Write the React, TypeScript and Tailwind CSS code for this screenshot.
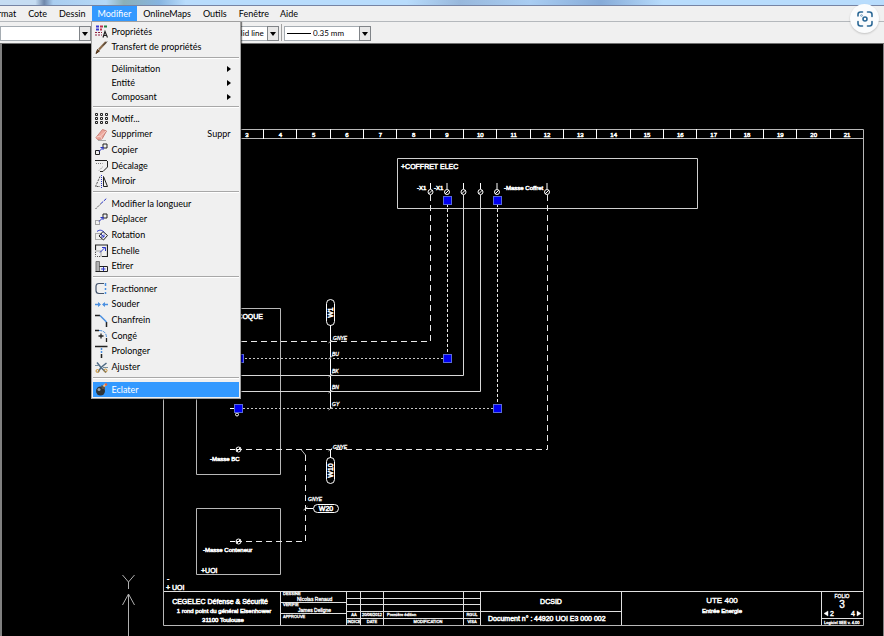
import type { ReactNode } from 'react';

type MenuItem = {
  label: string;
  icon?: ReactNode;
  shortcut?: string;
  submenu?: boolean;
  active?: boolean;
};

const BLUE = '#2a35c8';
const SKY = '#4a8fe0';
const INK = '#222222';

// 13x13 menu icons
const icons = {
  properties: (
    <>
      <path d="M1 1.5h3M1 4.5h3" stroke="#3a3ad0" strokeWidth="2" />
      <path d="M5 1.5h3M5 4.5h2" stroke="#c03050" strokeWidth="2" />
      <path d="M9 1.5h3" stroke="#208040" strokeWidth="2" />
      <path d="M0 7.5h7M0 10h7" stroke="#902040" strokeDasharray="2 1" />
      <path d="M8 12.5l2-6 2.5 6M8.5 10.5h3" stroke={INK} strokeWidth="1.2" />
    </>
  ),
  brush: (
    <>
      <path d="M1 12.5l1.5-4 2 1.5z" fill="#8a5a28" stroke="#4a3018" />
      <path d="M4 8.5L11 1" stroke="#8c6b4a" strokeWidth="2.2" />
      <path d="M8 4.5L12 .5" stroke="#333" />
    </>
  ),
  pattern: (
    <path
      d="M.5 1.5h2v2h-2zM5.5 1.5h2v2h-2zM10.5 1.5h2v2h-2zM.5 5.5h2v2h-2zM5.5 5.5h2v2h-2zM10.5 5.5h2v2h-2zM.5 9.5h2v2h-2zM5.5 9.5h2v2h-2zM10.5 9.5h2v2h-2z"
      stroke={INK}
    />
  ),
  eraser: (
    <>
      <path d="M1 9.5L7.5 1.5 11.5 3 7 11 2.5 11.5z" fill="#eda79c" stroke="#c98078" />
      <path d="M1.5 9l4-1 1.5 3M5.5 8l5.5-5" stroke="#f6d0c8" />
      <path d="M3 12.5h8" stroke="#a8a8a8" />
    </>
  ),
  copy: (
    <>
      <path d="M.5 7.5h4v4h-4zM8 1h4v4H8z" stroke={INK} />
      <path d="M4 8.5L8 4.5M5.5 4.5H8V7" stroke={BLUE} />
    </>
  ),
  offset: (
    <>
      <path d="M0 1.5h12.5V8L8 12.5H5" stroke={INK} strokeDasharray="12 1 20" />
      <path d="M1 4.5h6.5M7.5 8L4 11.5" stroke="#777" strokeDasharray="1 1" />
    </>
  ),
  mirror: (
    <>
      <path d="M5 1.5L.5 11.5H5" stroke="#555" strokeDasharray="2 1" />
      <path d="M6.5 0v13" stroke={BLUE} strokeDasharray="1 1" />
      <path d="M8.5 1.5v10h4z" stroke={INK} />
    </>
  ),
  lengthen: (
    <>
      <path d="M.5 12L6 6.5" stroke="#555" strokeDasharray="2 1" />
      <path d="M6 6.5L12 1" stroke={BLUE} strokeDasharray="3 1" />
    </>
  ),
  move: (
    <>
      <path d="M.5 7.5h4v4h-4z" stroke="#555" strokeDasharray="1 1" />
      <path d="M8 1h4v4H8z" stroke={INK} />
      <path d="M4 8.5L8 4.5M5.5 4.5H8V7" stroke={BLUE} />
    </>
  ),
  rotate: (
    <>
      <path d="M.5 5.5h6v6h-6z" stroke="#666" strokeDasharray="1 1" />
      <path d="M8 3.5l4.5 4-4 4.5-4.5-4z" stroke={INK} />
      <path d="M2 3.5c3-2.5 6-1 7 1M6 6l3 3M9 6.5V9H6.5" stroke={BLUE} />
    </>
  ),
  scale: (
    <>
      <path d="M.5 6V1h12v11.5H7" stroke={INK} strokeWidth="1.2" />
      <path d="M.5 7H6v5.5H.5z" stroke="#555" strokeDasharray="1 1" />
      <path d="M5 8.5l5-5M7 3.5h3.5V7" stroke={BLUE} />
    </>
  ),
  stretch: (
    <>
      <path d="M1 1.5h3.500v10H1z" fill="#b0b0b0" stroke="#777" />
      <path d="M4.5 6.5h8v5H.5" stroke={INK} />
      <path d="M6 9h4.5M8.5 7v4" stroke={BLUE} />
    </>
  ),
  split: (
    <>
      <path d="M9 1.5H4q-3 0-3 3v4q0 3 3 3h5" stroke="#44546c" strokeWidth="1.2" />
      <path d="M10.5 1v3M10.5 6v2M10.5 10v2" stroke={SKY} strokeWidth="1.5" />
    </>
  ),
  join: (
    <>
      <path d="M0 6.500h5M8 6.500h5" stroke={SKY} strokeWidth="1.5" />
      <path d="M3 4l3 2.5L3 9zM10 4L7 6.5 10 9z" fill={SKY} />
    </>
  ),
  chamfer: (
    <>
      <path d="M0 1.5h5M11.5 8v5" stroke={INK} strokeWidth="1.5" />
      <path d="M5 1.5L11.5 8" stroke={SKY} strokeWidth="1.5" />
    </>
  ),
  fillet: (
    <>
      <path d="M0 1.5h4M11.5 9v4" stroke={INK} strokeWidth="1.3" />
      <path d="M4 1.5q7.5 0 7.5 7.5" stroke={SKY} strokeDasharray="3 1" />
      <path d="M6 4.5v5M3.5 7h5" stroke={INK} strokeWidth="1.3" />
    </>
  ),
  extend: (
    <>
      <path d="M0 1.5h12.5" stroke={INK} strokeWidth="1.5" />
      <path d="M6.5 3v6" stroke={SKY} strokeWidth="1.5" strokeDasharray="2 1" />
      <path d="M6.5 9v4" stroke={INK} strokeWidth="1.5" />
    </>
  ),
  trim: (
    <>
      <path d="M2 1.5l4 5 5 5M11.5 2L6 6.5 3 11" stroke="#4e6a84" strokeWidth="1.5" />
      <circle cx="2.5" cy="10" r="1.5" stroke="#c89030" />
      <circle cx="10.5" cy="9.5" r="1.5" stroke="#c89030" />
      <path d="M0 4.5h4M8 6.5h5" stroke="#7890a0" />
    </>
  ),
  explode: (
    <>
      <circle cx="5.5" cy="8" r="4.5" fill="#2e3438" />
      <circle cx="4" cy="6.5" r="1.5" fill="#9aa2a6" />
      <path d="M6 2.5h4V6H7z" fill="#5b5045" />
      <path d="M8.5 3.5L11 1" stroke="#f3c38a" strokeWidth="2" />
      <circle cx="11" cy="1.5" r="1.2" fill="#e8643a" />
    </>
  ),
};

const groups: { height: string; items: MenuItem[] }[] = [
  {
    height: 'h-[31px]',
    items: [
      { label: 'Propriétés', icon: icons.properties },
      { label: 'Transfert de propriétés', icon: icons.brush },
    ],
  },
  {
    height: 'h-[42px]',
    items: [
      { label: 'Délimitation', submenu: true },
      { label: 'Entité', submenu: true },
      { label: 'Composant', submenu: true },
    ],
  },
  {
    height: 'h-[78px]',
    items: [
      { label: 'Motif...', icon: icons.pattern },
      { label: 'Supprimer', icon: icons.eraser, shortcut: 'Suppr' },
      { label: 'Copier', icon: icons.copy },
      { label: 'Décalage', icon: icons.offset },
      { label: 'Miroir', icon: icons.mirror },
    ],
  },
  {
    height: 'h-[78px]',
    items: [
      { label: 'Modifier la longueur', icon: icons.lengthen },
      { label: 'Déplacer', icon: icons.move },
      { label: 'Rotation', icon: icons.rotate },
      { label: 'Echelle', icon: icons.scale },
      { label: 'Etirer', icon: icons.stretch },
    ],
  },
  {
    height: 'h-[94px]',
    items: [
      { label: 'Fractionner', icon: icons.split },
      { label: 'Souder', icon: icons.join },
      { label: 'Chanfrein', icon: icons.chamfer },
      { label: 'Congé', icon: icons.fillet },
      { label: 'Prolonger', icon: icons.extend },
      { label: 'Ajuster', icon: icons.trim },
    ],
  },
  {
    height: 'h-[15px]',
    items: [{ label: 'Eclater', icon: icons.explode, active: true }],
  },
];

const MenuRow = ({ item }: { item: MenuItem }) => (
  <button
    role="menuitem"
    className={`flex min-h-0 w-full items-center pl-[2px] pr-2 text-left ${item.active ? 'bg-[#3399ff] text-white' : ''}`}
  >
    <span className="w-[17px] shrink-0">
      {item.icon && (
        <svg viewBox="0 0 13 13" className="size-[13px]" fill="none">
          {item.icon}
        </svg>
      )}
    </span>
    <span className="flex-1">{item.label}</span>
    {item.shortcut && <span>{item.shortcut}</span>}
    {item.submenu && (
      <svg viewBox="0 0 4 6" className="h-[6px] w-1" fill="#000">
        <path d="M0 0l4 3-4 3z" />
      </svg>
    )}
  </button>
);

const EditMenu = () => (
  <div
    role="menu"
    className="absolute -left-px top-full z-20 w-[150px] border border-[#a0a0a0] bg-[#f0f0f0] px-px pt-[2px] pb-px text-black shadow-[1px_1px_1px_#00000080]"
  >
    {groups.map((group, i) => (
      <div key={i}>
        {i > 0 && (
          <div className="h-[7px] pt-[2px]">
            <div className="h-[2px] border-t border-b border-t-[#a8a8a8] border-b-white" />
          </div>
        )}
        <div className={`grid auto-rows-fr ${group.height}`}>
          {group.items.map((item) => (
            <MenuRow key={item.label} item={item} />
          ))}
        </div>
      </div>
    ))}
  </div>
);

const MenuBar = () => (
  <nav className="flex h-4 bg-[#f0f0f0] border-b border-[#b4b8bc]">
    <button className="-ml-[18px] px-[6px]">Format</button>
    <button className="px-[6px]">Cote</button>
    <button className="px-[6px]">Dessin</button>
    <div className="relative flex">
      <button className="bg-[#3399ff] px-[6px] text-white" aria-haspopup="menu" aria-expanded="true">
        Modifier
      </button>
      <EditMenu />
    </div>
    <button className="px-[6px]">OnlineMaps</button>
    <button className="px-[6px]">Outils</button>
    <button className="px-[6px]">Fenêtre</button>
    <button className="px-[5px]">Aide</button>
  </nav>
);

type ComboProps = { label: string; value: string; width: string; pad: string; line?: boolean };

const Combo = ({ label, value, width, pad, line }: ComboProps) => (
  <div className={`relative h-[15px] ${width}`}>
    <select
      aria-label={label}
      defaultValue={value}
      className={`block h-full w-full appearance-none border border-[#a5acb2] bg-white text-[8px] leading-[13px] ${pad}`}
    >
      <option>{value}</option>
    </select>
    {line && <div className="pointer-events-none absolute left-[3px] top-[7px] h-px w-6 bg-black" />}
    <div className="pointer-events-none absolute inset-y-0 right-0 flex w-3 items-center justify-center border border-[#808488] bg-[#e8e8e8]">
      <svg viewBox="0 0 6 4" className="h-1 w-[6px]">
        <path d="M0 0h6L3 4z" />
      </svg>
    </div>
  </div>
);

const Toolbar = () => (
  <div className="flex h-[22px] items-end border-b border-[#707070] bg-[#f0f0f0] pb-[2px]">
    <Combo label="Calque" value="" width="w-[91px]" pad="pl-1" />
    <div className="ml-[99px] mr-[2px]">
      <Combo label="Type de ligne" value="Solid line" width="w-[89px]" pad="pl-[41px]" line />
    </div>
    <div className="mr-[2px] h-[17px] w-px bg-[#a0a0a0]" />
    <Combo label="Epaisseur" value="0.35 mm" width="w-[87px]" pad="pl-[28px]" line />
  </div>
);

const columns = Array.from({ length: 19 }, (_, i) => i + 3);

const terminals = [430.5, 447, 463.5, 480.5, 497, 547];

const wireLabels = [
  { x: 333, y: 340, name: 'GNYE' },
  { x: 332, y: 356, name: 'BU' },
  { x: 332, y: 373, name: 'BK' },
  { x: 332, y: 389, name: 'BN' },
  { x: 332, y: 406, name: 'GY' },
  { x: 333, y: 449, name: 'GNYE' },
  { x: 308, y: 501, name: 'GNYE' },
];

const grips = [
  [447, 200],
  [497, 200],
  [447, 358],
  [239, 358],
  [497, 408],
  [238, 408],
];

const Terminal = ({ x, y }: { x: number; y: number }) => (
  <>
    <circle cx={x} cy={y} r="2.5" />
    <path d={`M${x - 2} ${y + 2}l4-4`} />
  </>
);

const Drawing = () => (
  <svg
    viewBox="0 44 884 592"
    className="block h-auto w-full"
    fontFamily="'Liberation Sans', Arial, sans-serif"
    role="img"
    aria-label="Schéma de câblage UTE 400"
  >
    {/* Sheet frame, boxes and solid wires */}
    <g fill="none" stroke="#b8b8b8">
      <path d="M163.5 129.5H863.5V625.5H163.5zM163.5 138.5H863.5" />
      {columns.slice(0, -1).map((n, i) => (
        <path key={n} d={`M${Math.round(263 + (i * 100) / 3) + 0.5} 129v10`} stroke="#fff" />
      ))}
      <path d="M397.5 158.5H697.5V208.5H397.5z" stroke="#d0d0d0" />
      <path d="M196.5 308.5H280.5V474.5H196.5zM196.5 508.5H280.5V574.5H196.5z" />
      <path d="M463.5 195V375.5H240M480.5 195V391.5H240" stroke="#d8d8d8" />
      <path d="M330.5 325V409M330.5 449V458M305 508.5h8" stroke="#fff" />
      <path d="M328.5 343l4-3M328.5 359l4-3M328.5 377l4-3M328.5 393l4-3M328.5 410l4-3M328.5 451l4-3M303.5 510l4-3M301 449.5l4.5 5.5" />
    </g>

    {/* Dashed wires */}
    <g fill="none" stroke="#e8e8e8">
      <path d="M430.5 195V341.5H240M547.5 195V449.5H230M305.5 455V541.5H230" strokeDasharray="6 4" />
      <path d="M447.5 204V358M497.5 204V408" strokeDasharray="3 2" />
      <path d="M447 358.5H240M497 408.5H230" strokeDasharray="2 2" stroke="#c8c8c8" />
    </g>

    <g fill="none" stroke="#fff">
      {terminals.map((x) => (
        <g key={x}>
          <path d={`M${x} 183v6`} />
          <Terminal x={x} y={192} />
        </g>
      ))}
      <Terminal x={238.5} y={449.5} />
      <Terminal x={238.5} y={541.5} />
      <path d="M230 408.5h6M230 449.5h5M230 541.5h5" />
      <circle cx="237" cy="414.5" r="1.5" />
      <rect x="326.5" y="299.5" width="8" height="26" rx="4" />
      <rect x="326.5" y="457.5" width="8" height="26" rx="4" />
      <rect x="313.5" y="504.5" width="25" height="8" rx="4" />
    </g>

    {grips.map(([x, y]) => (
      <rect key={`${x}-${y}`} x={x - 3.5} y={y - 3.5} width="8" height="8" fill="#0000f0" stroke="#5a6ad8" />
    ))}

    {/* Title block */}
    <g fill="none" stroke="#e0e0e0">
      <path d="M164 591.5H863M280.5 591v34M346.5 591v34M360.5 591v34M383.5 591v34M463.5 591v34M480.5 591v34M621.5 591v34M821.5 591v34" />
      <path d="M281 602.5h65M281 613.5h65M347 598.5h133M347 604.5h133M347 611.5h274M347 618.5h133M822 618.5h41" />
    </g>

    {/* UCS marker */}
    <path
      d="M128.5 636V594M122.5 605l6-11 6 11M122.5 575l6 7 6-7M128.5 582v7"
      fill="none"
      stroke="#b0b0b0"
    />

    <g fill="#fff" stroke="#fff" strokeWidth="0.5" fontSize="7">
      <text x="401" y="169">+COFFRET ELEC</text>
      <text x="263" y="319" textAnchor="end">+COQUE</text>
      <text x="201" y="573">+UOI</text>
      <text x="167" y="581">-</text>
      <text x="166" y="590">+ UOI</text>
      <text x="220" y="604" textAnchor="middle">CEGELEC Défense &amp; Sécurité</text>
      <text x="551" y="604" textAnchor="middle">DCSID</text>
      <text x="488" y="621">Document n° :</text>
      <text x="534" y="621">44920 UOI E3 000 002</text>
    </g>

    <g fill="#fff" stroke="#fff" strokeWidth="0.5" fontSize="6">
      <text x="417" y="190">-X1</text>
      <text x="434" y="190">-X1</text>
      <text x="504" y="190">-Masse Coffret</text>
      <text x="210" y="461">-Masse BC</text>
      <text x="203" y="552">-Masse Conteneur</text>
      <text x="224" y="613" textAnchor="middle">1 rond point du général Eisenhower</text>
      <text x="223" y="622" textAnchor="middle">31100 Toulouse</text>
      <text x="722" y="613" textAnchor="middle">Entrée Energie</text>
      <text transform="translate(333 312.5) rotate(-90)" textAnchor="middle" fontSize="7">W1</text>
      <text transform="translate(333 470.5) rotate(-90)" textAnchor="middle" fontSize="7">W10</text>
      <text x="326" y="511" textAnchor="middle" fontSize="7">W20</text>
      {columns.map((n, i) => (
        <text key={n} x={247 + (i * 100) / 3} y="137" textAnchor="middle">
          {n}
        </text>
      ))}
    </g>

    <g fill="#fff" stroke="#fff" strokeWidth="0.4" textAnchor="middle">
      <text x="722" y="603" fontSize="8">UTE 400</text>
      <text x="842" y="608" fontSize="10">3</text>
      <text x="832" y="616" fontSize="7">2</text>
      <text x="853" y="616" fontSize="7">4</text>
      <path d="M828 611v5l-4-2.5zM857 611v5l4-2.5z" />
    </g>

    <g fill="#fff" stroke="#fff" strokeWidth="0.3" fontSize="5">
      {wireLabels.map((w) => (
        <text key={`${w.x}-${w.y}`} x={w.x} y={w.y} fontStyle="italic">
          {w.name}
        </text>
      ))}
      <text x="297" y="601">Nicolas Renaud</text>
      <text x="298" y="612">James Deligne</text>
      <text x="842" y="598" textAnchor="middle">FOLIO</text>
    </g>

    <g fill="#fff" stroke="#fff" strokeWidth="0.3" fontSize="4">
      <text x="283" y="595">DESSINE</text>
      <text x="283" y="606">VERIFIE</text>
      <text x="283" y="618">APPROUVE</text>
      <text x="387" y="616">Première édition</text>
      <text x="824" y="624">Logiciel SEE v. 4.00</text>
      <g textAnchor="middle">
        <text x="354" y="616">AA</text>
        <text x="372" y="616">20/06/2012</text>
        <text x="472" y="616">RGUL</text>
        <text x="354" y="623">INDICE</text>
        <text x="372" y="623">DATE</text>
        <text x="428" y="623">MODIFICATION</text>
        <text x="472" y="623">VISA</text>
      </g>
    </g>
  </svg>
);

const App = () => (
  <div className="relative flex min-h-screen flex-col overflow-hidden bg-black font-['Lato',sans-serif] text-[9px] leading-[14px] text-black">
    <div className="h-[6px] border-b border-[#7684a4] bg-[linear-gradient(90deg,#c5dcf2_0%,#c5dcf2_4%,#6f87aa_5%,#a9cdf0_6%,#b5d8f6_12%,#8bb0b8_14%,#86b4e0_18%,#b8dcfc_21%,#b8dcfc_46%,#98b8dc_52%,#a9cdf2_60%,#86abd8_68%,#b8dcfc_75%,#b8dcfc_100%)]" />
    <MenuBar />
    <Toolbar />
    <main className="flex-1 border-l-2 border-r border-[#808080]">
      <div className="-ml-[2px] -mr-px">
        <Drawing />
      </div>
    </main>
    <button
      aria-label="Recherche visuelle"
      className="absolute right-[5px] top-1 z-30 flex size-[29px] items-center justify-center rounded-full bg-[#fbfcfd] shadow-[0_1px_2px_#00000030]"
    >
      <svg viewBox="0 0 16 16" className="size-4" fill="none" stroke="#2b6896" strokeWidth="1.6" strokeLinecap="round">
        <path d="M1 5V3.5Q1 1 3.5 1h2M10.5 1h2Q15 1 15 3.5v2M15 10.5v2q0 2.5-2.5 2.5h-2M5.5 15h-2Q1 15 1 12.5v-2" />
        <circle cx="8" cy="8" r="2" />
        <circle cx="4.5" cy="4.5" r=".3" />
      </svg>
    </button>
  </div>
);

export default App;
